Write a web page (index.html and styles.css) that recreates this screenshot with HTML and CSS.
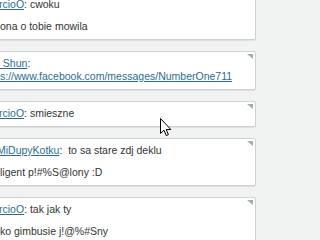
FILE: index.html
```html
<!DOCTYPE html>
<html>
<head>
<meta charset="utf-8">
<link rel="stylesheet" href="styles.css">
</head>
<body>
<div class="feed">
  <div class="card">
    <span class="corner"></span>
    <p class="line shift"><a href="#">rcioO</a>: cwoku</p>
    <p class="line msg">ona o tobie mowila</p>
  </div>
  <div class="card">
    <span class="corner"></span>
    <p class="line"><a href="#" class="pre">_Shun</a>:<br><a href="#" class="url">s://www.facebook.com/messages/NumberOne711</a></p>
  </div>
  <div class="card">
    <span class="corner"></span>
    <p class="line shift"><a href="#">rcioO</a>: smieszne</p>
  </div>
  <div class="card">
    <span class="corner"></span>
    <p class="line shift2"><a href="#">MiDupyKotku</a>:&nbsp; to sa stare zdj deklu</p>
    <p class="line msg">ligent p!#%S@lony :D</p>
  </div>
  <div class="card">
    <span class="corner"></span>
    <p class="line shift"><a href="#">rcioO</a>: tak jak ty</p>
    <p class="line msg">ko gimbusie j!@%#Sny</p>
  </div>
</div>
<svg class="cursor" width="12" height="19" viewBox="0 0 12 19"><path d="M0.5 0.5 L0.5 15.5 L4 12.2 L6.3 17.6 L8.4 16.7 L6.2 11.5 L10.8 11.5 Z" fill="#fff" stroke="#000" stroke-width="1"/></svg>
</body>
</html>
```
FILE: styles.css
```css
html, body {
  margin: 0;
  padding: 0;
  background: #f1f2f2;
  overflow: hidden;
  width: 320px;
  height: 240px;
}
body {
  font-family: "Liberation Sans", Arial, sans-serif;
  font-size: 10.5px;
  color: #333;
  position: relative;
}
.feed {
  display: flex;
  flex-direction: column;
  gap: 11px;
  width: 266px;
  margin-left: -10px;
  margin-top: -8px;
}
.card {
  position: relative;
  background: #fff;
  border: 1px solid #cdd1d1;
  border-radius: 2px;
  box-shadow: 0 1px 1px rgba(0, 0, 0, 0.08);
  padding: 5px 8px 6px 9px;
}
.corner {
  position: absolute;
  top: 2px;
  right: 2px;
  width: 0;
  height: 0;
  border-top: 5px solid #a3adad;
  border-left: 6px solid transparent;
}
.line {
  margin: 0;
  line-height: 13px;
  white-space: nowrap;
}
.msg {
  margin-top: 9px;
}
.shift { text-indent: -1px; }
.shift2 { text-indent: -3px; }
a {
  color: #2a6d93;
  text-decoration: underline;
}
.pre { margin-left: -3px; }
.cursor {
  position: absolute;
  left: 160px;
  top: 118px;
}
```
